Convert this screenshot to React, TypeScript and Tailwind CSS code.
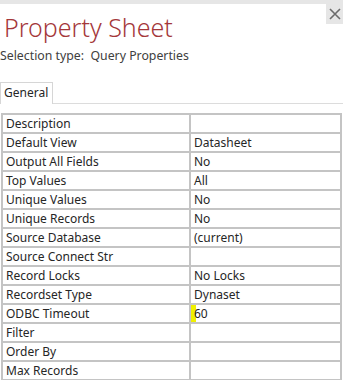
import React from 'react'

const rows: [string, string][] = [
  ['Description', ''],
  ['Default View', 'Datasheet'],
  ['Output All Fields', 'No'],
  ['Top Values', 'All'],
  ['Unique Values', 'No'],
  ['Unique Records', 'No'],
  ['Source Database', '(current)'],
  ['Source Connect Str', ''],
  ['Record Locks', 'No Locks'],
  ['Recordset Type', 'Dynaset'],
  ['ODBC Timeout', '60'],
  ['Filter', ''],
  ['Order By', ''],
  ['Max Records', ''],
]

export default function App() {
  return (
    <div
      className="w-[343px] h-[380px] overflow-hidden bg-white text-[#262626]"
      style={{ fontFamily: '"Noto Sans", "Open Sans", sans-serif' }}
    >
      <div className="h-[4px] bg-[#e6e6e6]" />

      {/* header */}
      <div className="flex justify-between">
        <div className="pl-[4px] pt-[8px] text-[25px] leading-[31px] font-light text-[#a4373a]">
          Property Sheet
        </div>
        <div className="w-[17px] h-[20px] bg-[#e6e6e6] flex items-center justify-center">
          <svg width="12" height="12" viewBox="0 0 12 12">
            <path d="M1 1L11 11M11 1L1 11" stroke="#6b6b6b" strokeWidth="1.6" />
          </svg>
        </div>
      </div>
      <div className="mt-[5px] text-[12.3px] leading-[16px] text-[#404040]">
        Selection type:&nbsp; Query Properties
      </div>

      {/* tab strip */}
      <div className="mt-[18px] flex items-end">
        <div className="h-[22px] w-[53px] border border-b-0 border-[#d6d6d6] pl-[3px] pt-[2px] text-[12px] leading-[16px] text-[#262626]">
          General
        </div>
        <div className="flex-1 border-b border-[#dcdcdc]" />
      </div>

      {/* property grid */}
      <div className="mt-[9px] ml-[1px] w-[341px] bg-[#c4c4c4] p-[2px] flex flex-col gap-[2px]">
        {rows.map(([label, value]) => (
          <div key={label} className="grid grid-cols-[186px_1fr] gap-[2px] h-[17px]">
            <div className="bg-white pl-[3px] text-[12px] leading-[17px] text-[#262626] whitespace-nowrap">
              {label}
            </div>
            <div className="bg-white relative pl-[3px] text-[12px] leading-[17px] text-[#262626] whitespace-nowrap">
              {label === 'ODBC Timeout' && (
                <span className="absolute left-0 top-0 h-[17px] w-[5px] bg-[#f0f000]" />
              )}
              <span className="relative">{value}</span>
            </div>
          </div>
        ))}
      </div>
    </div>
  )
}
